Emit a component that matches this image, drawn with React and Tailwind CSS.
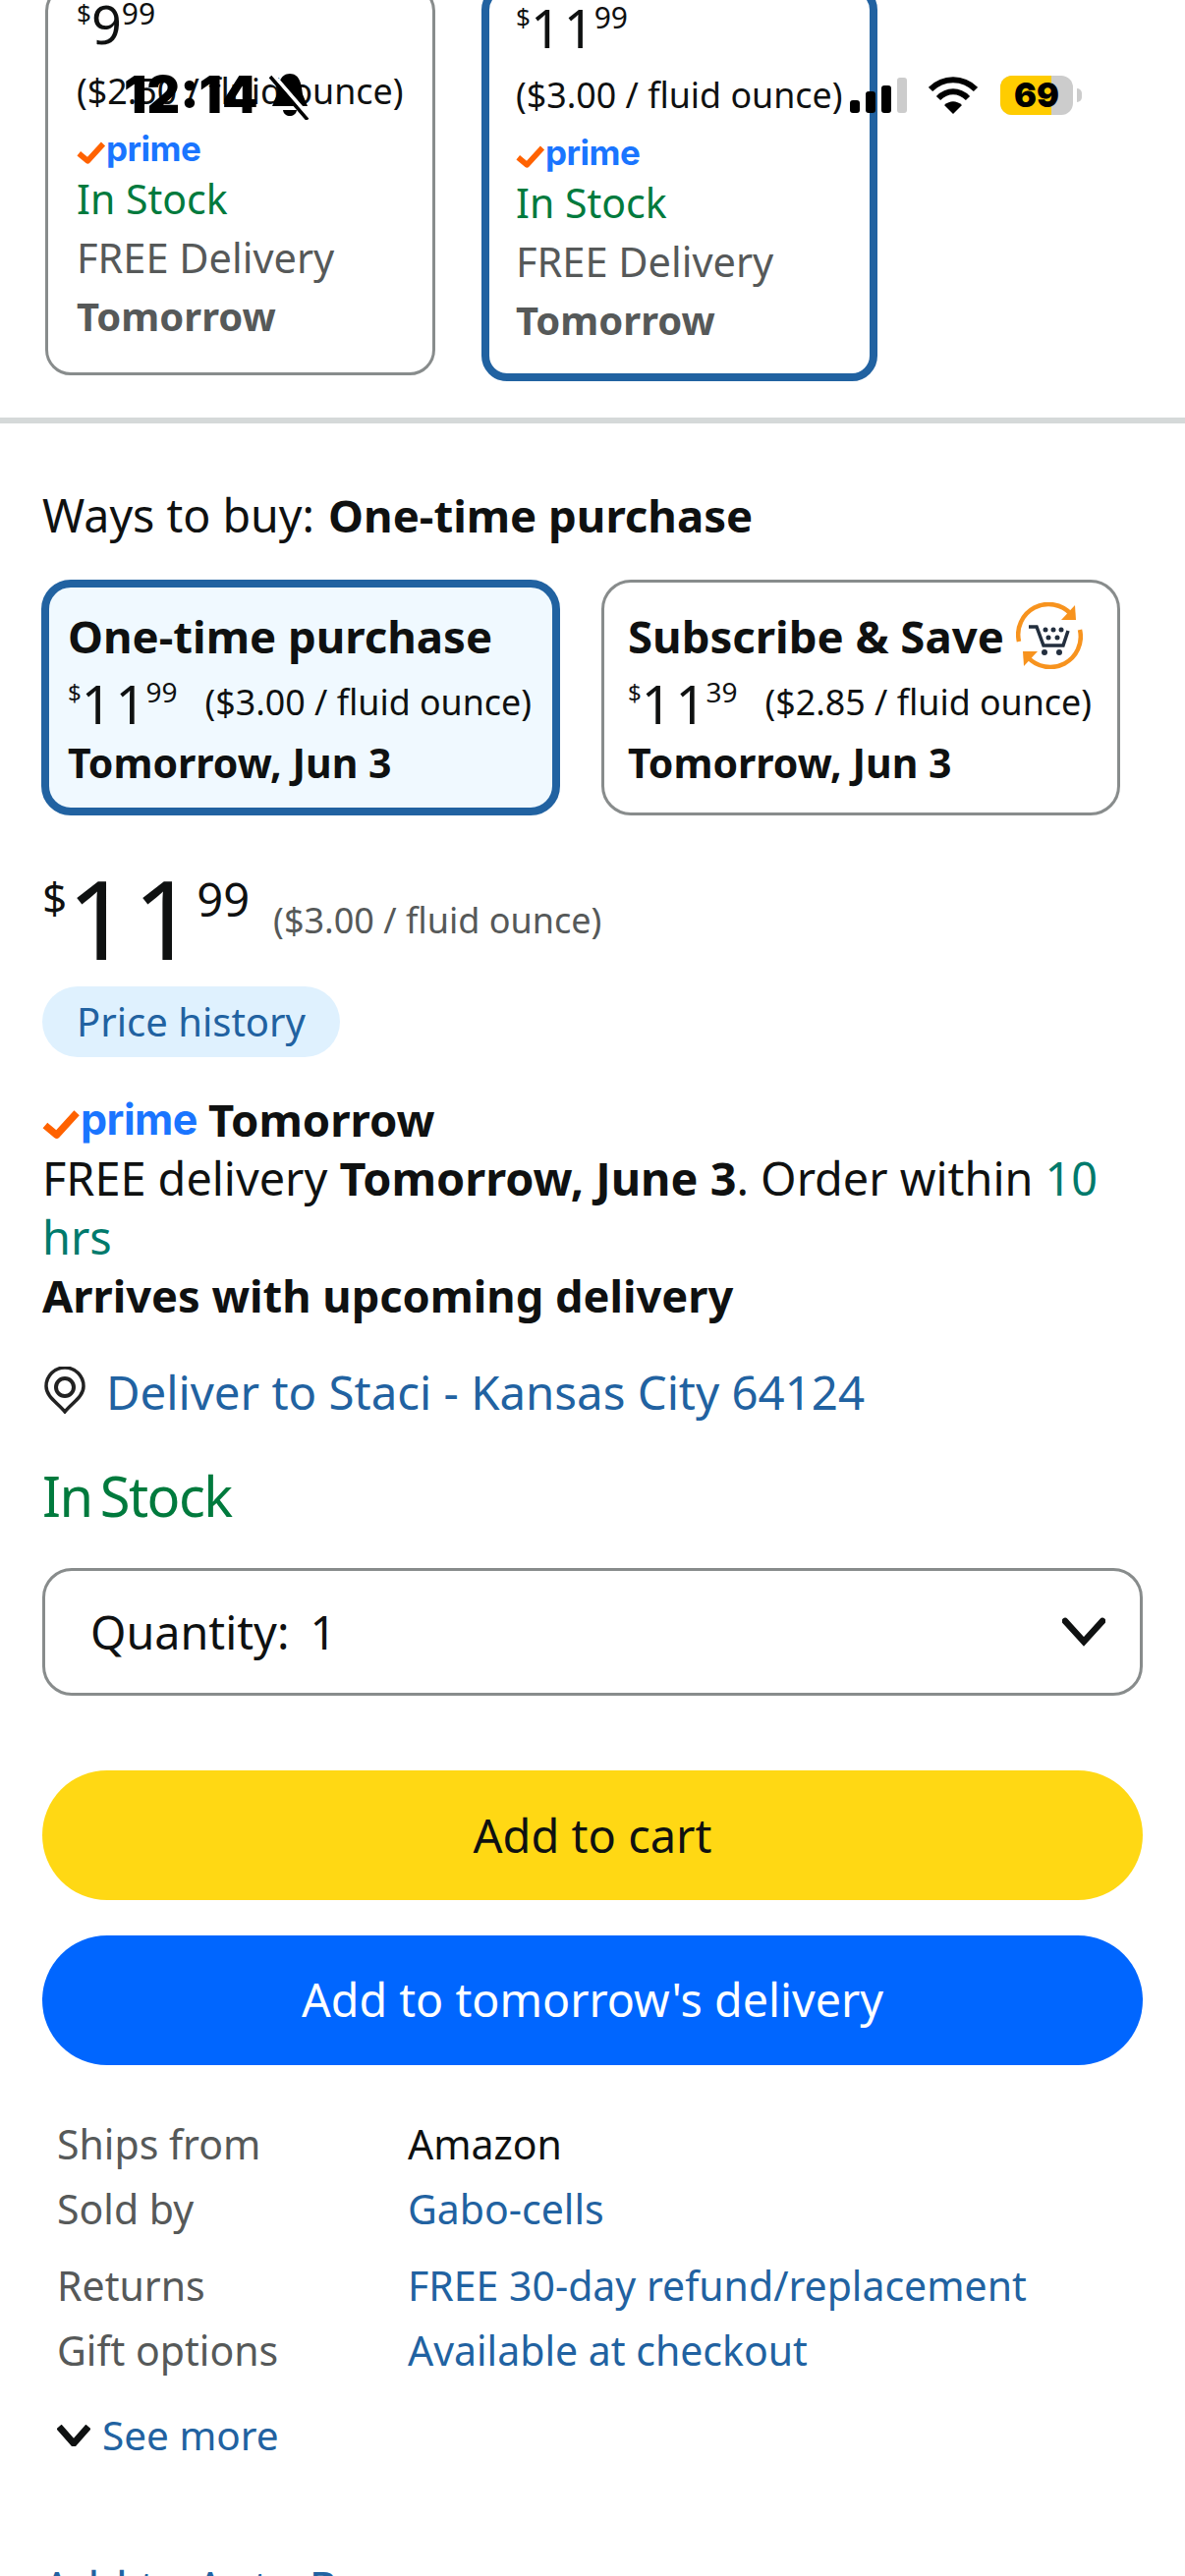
const PrimeLogo = ({ big }) => (
  <span className={`flex items-center ${big ? 'h-[44px]' : 'h-[40px]'}`}>
    <svg className={big ? 'w-[39px] h-[33px] mt-[11px]' : 'w-[30px] h-[27px] mt-[9px]'} viewBox="0 0 40 32">
      <path d="M3 17 L15 27 L36 4" fill="none" stroke="#ff6200" strokeWidth="7.5" strokeLinejoin="round" />
    </svg>
    <span className={`font-['Inter'] font-bold text-[#1a75ff] tracking-[-0.5px] ${big ? 'text-[43px]' : 'text-[35px]'}`}>prime</span>
  </span>
);

const VariantCard = ({ price, cents, unit, selected }) => (
  <div
    className={`rounded-[26px] ${
      selected
        ? 'w-[403px] -mt-[2px] border-[8px] border-[#2162a1] pb-[24px] pl-[27px]'
        : 'w-[397px] -mt-[1px] border-[3px] border-[#888c8c] pb-[27px] pl-[29px]'
    }`}
  >
    <div className="flex items-start h-[79px] text-[#0f1111]">
      <span className="text-[26px] mt-[6px]">$</span>
      <span className="text-[54px] leading-[72px] tracking-[3px] -mr-[3px]">{price}</span>
      <span className="text-[30px] mt-[3px]">{cents}</span>
    </div>
    <div className="text-[35.8px] leading-[50px] text-[#0f1111] whitespace-nowrap">{unit}</div>
    <div className="mt-[14px]">
      <PrimeLogo />
    </div>
    <div className="text-[41px] leading-[60px] mt-[1px] text-[#007a3d]">In Stock</div>
    <div className="text-[41.5px] leading-[60px] text-[#565959]">FREE Delivery</div>
    <div className="text-[40px] leading-[60px] font-bold text-[#565959]">Tomorrow</div>
  </div>
);

const BuyOption = ({ title, price, cents, unit, selected, icon }) => (
  <div
    className={`h-[240px] w-[528px] shrink-0 rounded-[30px] ${
      selected ? 'border-[8px] border-[#2162a1] bg-[#f0f9ff] pl-[19px] pt-[18px]' : 'border-[3px] border-[#888c8c] pl-[24px] pt-[23px]'
    }`}
  >
    <div className="flex items-center h-[62px] mb-[3px] text-[45.5px] font-bold text-[#0f1111] leading-[60px] whitespace-nowrap">
      {title}
      {icon}
    </div>
    <div className="flex items-start h-[65px] text-[#0f1111]">
      <span className="text-[24px] mt-[6px]">$</span>
      <span className="text-[54px] leading-[70px] tracking-[4px] -mr-[4px]">{price}</span>
      <span className="text-[28px] mt-[2px]">{cents}</span>
      <span className="text-[35.8px] leading-[66px] ml-[28px] whitespace-nowrap">{unit}</span>
    </div>
    <div className="text-[41px] font-bold leading-[60px] text-[#0f1111]">Tomorrow, Jun 3</div>
  </div>
);

const SaveIcon = () => (
  <svg className="w-[68px] h-[68px] ml-[12px]" viewBox="0 0 68 68">
    <path d="M3 40 A31 31 0 0 1 56 12" fill="none" stroke="#f7931e" strokeWidth="4.5" />
    <path d="M46 18 L61 18 L60 3" fill="#f7931e" />
    <path d="M65 28 A31 31 0 0 1 12 56" fill="none" stroke="#f7931e" strokeWidth="4.5" />
    <path d="M22 50 L7 50 L8 65" fill="#f7931e" />
    <path d="M13 25 L21 25 L28 44 L48 44 L53 29" fill="none" stroke="#232f3e" strokeWidth="3.5" />
    <circle cx="29" cy="51" r="3" fill="#232f3e" />
    <circle cx="44" cy="51" r="3" fill="#232f3e" />
    <circle cx="30" cy="28" r="2.5" fill="#232f3e" />
    <circle cx="38" cy="28" r="2.5" fill="#232f3e" />
    <circle cx="46" cy="28" r="2.5" fill="#232f3e" />
    <circle cx="33" cy="36" r="2.5" fill="#232f3e" />
    <circle cx="42" cy="36" r="2.5" fill="#232f3e" />
  </svg>
);

const InfoRow = ({ label, value, link, className }) => (
  <div className={`flex text-[41px] leading-[66px] ${className}`}>
    <span className="w-[357px] text-[#565959]">{label}</span>
    <span className={link ? 'text-[#2162a1]' : 'text-[#0f1111]'}>{value}</span>
  </div>
);

const StatusBar = () => (
  <div className="absolute left-0 top-0 w-full h-[190px] pointer-events-none">
    <span className="absolute left-[126px] top-[67px] font-['Inter'] font-black text-[52px] leading-[60px] text-black">12:14</span>
    <svg className="absolute left-[272px] top-[72px] w-[46px] h-[50px]" viewBox="0 0 46 50">
      <path d="M23 3 C33 3 35 14 36 24 L41 36 L5 36 L10 24 C11 14 13 3 23 3 Z M16 40 L30 40 C29 48 17 48 16 40 Z" fill="black" />
      <path d="M5 3 L43 47" stroke="white" strokeWidth="4" />
      <path d="M3 6 L41 50" stroke="black" strokeWidth="3.5" />
    </svg>
    <div className="absolute left-[865px] top-[79px] flex items-end gap-[6px] h-[36px]">
      <div className="w-[10px] h-[13px] rounded-[3px] bg-black" />
      <div className="w-[10px] h-[22px] rounded-[3px] bg-black" />
      <div className="w-[10px] h-[28px] rounded-[3px] bg-black" />
      <div className="w-[10px] h-[36px] rounded-[3px] bg-[#cccccc]" />
    </div>
    <svg className="absolute left-[945px] top-[78px] w-[50px] h-[38px]" viewBox="0 0 50 38">
      <path d="M2 13 C15 0 35 0 48 13" fill="none" stroke="black" strokeWidth="6" />
      <path d="M10 22 C19 13 31 13 40 22" fill="none" stroke="black" strokeWidth="6" />
      <path d="M16 29 L25 38 L34 29 C28 24 22 24 16 29 Z" fill="black" />
    </svg>
    <div className="absolute left-[1018px] top-[77px] w-[74px] h-[40px] rounded-[12px] overflow-hidden bg-[#cccccc]">
      <div className="relative h-full w-[52px] bg-[#ffcc00]" />
      <span className="absolute inset-0 text-center font-['Inter'] font-black text-[34px] leading-[40px] text-black">69</span>
    </div>
    <div className="absolute left-[1096px] top-[90px] w-[5px] h-[14px] rounded-r-full bg-[#cccccc]" />
  </div>
);

export default function App() {
  return (
    <div className="relative h-[2622px] w-[1206px] overflow-hidden bg-white font-['Noto_Sans',sans-serif]">
      {/* Variant cards, scrolled partly out of view */}
      <div className="flex items-start gap-[47px] pl-[46px] -mt-[14px]">
        <VariantCard price="9" cents="99" unit="($2.50 / fluid ounce)" />
        <VariantCard price="11" cents="99" unit="($3.00 / fluid ounce)" selected />
      </div>
      <div className="h-[6px] bg-[#d5d9d9] mt-[37px]" />

      <div className="px-[43px]">
        <div className="mt-[63px] text-[46.5px] leading-[60px] text-[#0f1111]">
          Ways to buy: <span className="font-bold text-[45.5px] ml-[2px]">One-time purchase</span>
        </div>

        <div className="flex gap-[42px] mt-[36px] -ml-[1px]">
          <BuyOption title="One-time purchase" price="11" cents="99" unit="($3.00 / fluid ounce)" selected />
          <BuyOption title="Subscribe & Save" price="11" cents="39" unit="($2.85 / fluid ounce)" icon={<SaveIcon />} />
        </div>

        {/* Price */}
        <div className="flex items-start h-[110px] mt-[52px] text-[#0f1111]">
          <span className="text-[44px] leading-[50px] mt-[6px]">$</span>
          <span className="text-[112px] leading-[110px] tracking-[3px] -mr-[3px] -mt-[3px]">11</span>
          <span className="text-[47px] leading-[50px] mt-[8px] ml-[1px]">99</span>
          <span className="text-[36px] leading-[50px] text-[#565959] ml-[24px] mt-[30px]">($3.00 / fluid ounce)</span>
        </div>
        <div className="flex items-center justify-center w-[303px] h-[72px] rounded-full bg-[#dff1fe] text-[40px] text-[#2162a1] mt-[12px]">
          Price history
        </div>

        {/* Delivery */}
        <div className="flex items-center h-[60px] mt-[33px] text-[45.5px] font-bold text-[#0f1111]">
          <PrimeLogo big />
          <span className="ml-[11px]">Tomorrow</span>
        </div>
        <div className="text-[46.8px] leading-[60px] text-[#0f1111] w-[1120px]">
          FREE delivery <span className="font-bold">Tomorrow, June 3</span>. Order within <span className="text-[#007a6c]">10 hrs</span>
        </div>
        <div className="text-[45.2px] font-bold leading-[60px] text-[#0f1111]">Arrives with upcoming delivery</div>

        <div className="flex items-center h-[60px] mt-[38px]">
          <svg className="w-[42px] h-[48px] ml-[2px] -mt-[4px]" viewBox="0 0 42 48">
            <path d="M21 46 C14 37 2 31 2 20 A19 19 0 0 1 40 20 C40 31 28 37 21 46 Z" fill="#ffffff" stroke="#222222" strokeWidth="3.5" />
            <circle cx="21" cy="21" r="9" fill="#ffffff" stroke="#222222" strokeWidth="4" />
          </svg>
          <span className="ml-[21px] text-[47.4px] text-[#2162a1]">Deliver to Staci - Kansas City 64124</span>
        </div>

        <div className="mt-[40px] text-[56px] leading-[70px] text-[#007a3d] tracking-[-1.5px] [word-spacing:-5px]">In Stock</div>

        <div className="flex items-center justify-between w-[1120px] h-[130px] mt-[39px] border-[3px] border-[#888c8c] rounded-[30px] pl-[46px] pr-[35px]">
          <span className="text-[46.7px] text-[#0f1111]">
            Quantity:<span className="ml-[21px]">1</span>
          </span>
          <svg className="w-[44px] h-[30px]" viewBox="0 0 44 30">
            <path d="M3 4 L22 25 L41 4" fill="none" stroke="#0f1111" strokeWidth="6.5" strokeLinecap="round" />
          </svg>
        </div>

        <div className="flex items-center justify-center w-[1120px] h-[132px] mt-[76px] rounded-full bg-[#ffd814] text-[47px] text-[#0f1111]">
          Add to cart
        </div>
        <div className="flex items-center justify-center w-[1120px] h-[132px] mt-[36px] rounded-full bg-[#0066ff] text-[46.6px] text-white">
          Add to tomorrow's delivery
        </div>

        {/* Seller info */}
        <div className="pl-[15px] mt-[47px]">
          <InfoRow label="Ships from" value="Amazon" />
          <InfoRow label="Sold by" value="Gabo-cells" link />
          <InfoRow label="Returns" value="FREE 30-day refund/replacement" link className="mt-[12px]" />
          <InfoRow label="Gift options" value="Available at checkout" link />
          <div className="flex items-center h-[60px] mt-[24px] text-[40.5px] text-[#2162a1]">
            <svg className="w-[34px] h-[22px]" viewBox="0 0 34 22">
              <path d="M2 2 L17 19 L32 2" fill="none" stroke="#0f1111" strokeWidth="7" />
            </svg>
            <span className="ml-[12px]">See more</span>
          </div>
        </div>
        <div className="mt-[95px] text-[46.5px] leading-[60px] text-[#2162a1]">Add to Auto Rx</div>
      </div>

      <StatusBar />
    </div>
  );
}
